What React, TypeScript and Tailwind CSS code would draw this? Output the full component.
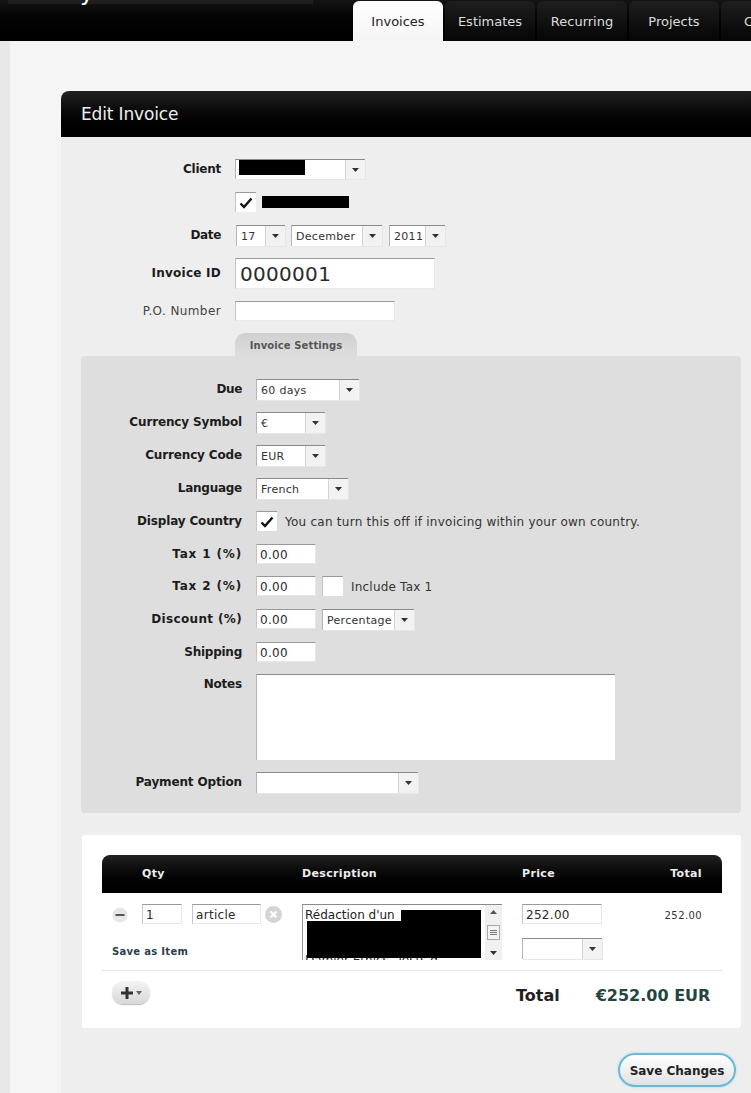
import React from "react";

const Arrow = () => (
  <svg width="7" height="4" viewBox="0 0 7 4" className="block">
    <path d="M0 0h7L3.5 4z" fill="#333" />
  </svg>
);

const Check = () => (
  <svg width="14" height="12" viewBox="0 0 14 12" className="block">
    <path d="M1.5 6.5 5 10l7.5-8.5" fill="none" stroke="#111" strokeWidth="2.4" />
  </svg>
);

function Select({ w, h = "h-[21px]", text, arrow = "w-[20px]" }: { w: string; h?: string; text?: string; arrow?: string }) {
  return (
    <div className={`${w} ${h} flex shrink-0 bg-white border-t border-t-[#8a8a8a] border-l border-l-[#b5b5b5] shadow-[1px_1px_0_#e6e6e6] text-[11px] text-[#333] tracking-[0.3px]`}>
      <div className="flex-1 min-w-0 pl-[4px] pt-[3px] whitespace-nowrap overflow-hidden">{text}</div>
      <div className={`${arrow} shrink-0 bg-[#f2f2f2] border-l border-l-[#d4d4d4] flex items-center justify-center`}>
        <Arrow />
      </div>
    </div>
  );
}

function Input({ w, h = "h-[20px]", text = "", cls = "text-[12px] pl-[3px] pt-[3px]" }: { w: string; h?: string; text?: string; cls?: string }) {
  return (
    <div className={`${w} ${h} ${cls} shrink-0 bg-white border-t border-t-[#9a9a9a] border-l border-l-[#c4c4c4] border-r border-r-[#e8e8e8] border-b border-b-[#e8e8e8] text-[#2a2a2a] tracking-[0.3px] whitespace-nowrap overflow-hidden leading-[15px]`}>
      {text}
    </div>
  );
}

function CheckBox({ on = false }: { on?: boolean }) {
  return (
    <div className="w-[21px] h-[20px] shrink-0 bg-white border-t border-t-[#9a9a9a] border-l border-l-[#c4c4c4] flex items-center justify-center">
      {on && <Check />}
    </div>
  );
}

function TopLabel({ children, bold = true, track = "tracking-[-0.25px]" }: { children: React.ReactNode; bold?: boolean; track?: string }) {
  return (
    <div className={`w-[160px] shrink-0 text-right text-[12px] leading-[18px] pt-[1px] ${track} ${bold ? "font-bold text-[#1c1c1c]" : "text-[#444]"}`}>
      {children}
    </div>
  );
}

function SetRow({ label, children, h = "h-[21px]", track = "tracking-[-0.15px]" }: { label: string; children: React.ReactNode; h?: string; track?: string }) {
  return (
    <div className={`flex gap-[14px] ${h}`}>
      <div className={`w-[161px] shrink-0 text-right font-bold text-[12px] leading-[18px] pt-[1px] text-[#1c1c1c] ${track}`}>{label}</div>
      {children}
    </div>
  );
}

export default function App() {
  return (
    <div className="w-[751px] h-[1093px] overflow-hidden bg-[#f5f5f5] font-['DejaVu_Sans',sans-serif]">
      <header className="h-[41px] bg-gradient-to-b from-[#141414] to-black flex">
        <div className="w-[353px] shrink-0 overflow-hidden">
          <div className="ml-[8px] w-[305px] h-[4px] bg-white/5" />
          <div className="mt-[-26px] pl-[80px] text-[24px] leading-[28px] text-white whitespace-nowrap">y</div>
        </div>
        <nav className="flex gap-[2px] items-end text-[13px]">
          <div className="w-[90px] h-[40px] shrink-0 rounded-t-[6px] bg-gradient-to-b from-white to-[#f5f5f5] text-[#222] flex items-center justify-center pt-[1px]">Invoices</div>
          <div className="w-[90px] h-[40px] shrink-0 rounded-t-[6px] bg-gradient-to-b from-[#1e1e1e] to-[#060606] text-[#ddd] flex items-center justify-center pt-[1px]">Estimates</div>
          <div className="w-[90px] h-[40px] shrink-0 rounded-t-[6px] bg-gradient-to-b from-[#1e1e1e] to-[#060606] text-[#ddd] flex items-center justify-center pt-[1px]">Recurring</div>
          <div className="w-[90px] h-[40px] shrink-0 rounded-t-[6px] bg-gradient-to-b from-[#1e1e1e] to-[#060606] text-[#ddd] flex items-center justify-center pt-[1px]">Projects</div>
          <div className="w-[90px] h-[40px] shrink-0 rounded-t-[6px] bg-gradient-to-b from-[#1e1e1e] to-[#060606] text-[#ddd] flex items-center pl-[23px] pt-[1px]">Clients</div>
        </nav>
      </header>

      <div className="flex h-[1052px]">
        <div className="w-[10px] shrink-0 bg-[#e8e8e8]" />
        <main className="flex-1 min-w-0 pl-[51px] pt-[50px]">
          <div className="h-[46px] rounded-tl-[8px] bg-gradient-to-b from-[#222] to-black text-[#eee] text-[17px] tracking-[-0.15px] leading-[47px] pl-[20px]">Edit Invoice</div>
          <section className="h-[956px] bg-[#eeeeee] pt-[22px]">
            <div className="flex gap-[14px] h-[20px] mb-[13px]">
              <TopLabel>Client</TopLabel>
              <div className="w-[130px] h-[20px] flex shrink-0 bg-white border-t border-t-[#8a8a8a] border-l border-l-[#b5b5b5] shadow-[1px_1px_0_#e6e6e6]">
                <div className="flex-1 pl-[3px]"><div className="w-[66px] h-[15px] bg-black" /></div>
                <div className="w-[20px] bg-[#f2f2f2] border-l border-l-[#d4d4d4] flex items-center justify-center"><Arrow /></div>
              </div>
            </div>
            <div className="flex gap-[14px] h-[20px] mb-[13px]">
              <div className="w-[160px] shrink-0" />
              <CheckBox on />
              <div className="w-[87px] h-[12px] mt-[4px] -ml-[8px] bg-black" />
            </div>
            <div className="flex gap-[14px] h-[21px] mb-[12px]">
              <TopLabel track="tracking-[-0.35px]">Date</TopLabel>
              <div className="flex ml-[1px]">
                <Select w="w-[49px]" text="17" />
                <div className="w-[6px]" />
                <Select w="w-[91px]" text="December" />
                <div className="w-[7px]" />
                <Select w="w-[56px]" text="2011" />
              </div>
            </div>
            <div className="flex gap-[14px] h-[31px] mb-[12px]">
              <div className="pt-[5px]"><TopLabel track="tracking-[0.25px]">Invoice ID</TopLabel></div>
              <Input w="w-[200px]" h="h-[31px]" text="0000001" cls="text-[20px] pl-[4px] pt-[8px]" />
            </div>
            <div className="flex gap-[14px] h-[20px] mb-[12px]">
              <TopLabel bold={false} track="tracking-[0.4px]">P.O. Number</TopLabel>
              <Input w="w-[160px]" />
            </div>
            <div className="ml-[174px] w-[122px] h-[23px] rounded-t-[10px] bg-gradient-to-b from-[#d0d0d0] to-[#dedede] text-center text-[10px] font-bold text-[#555] leading-[25px] tracking-[0.1px]">Invoice Settings</div>

            <div className="ml-[20px] w-[660px] bg-[#dedede] rounded-[4px] pt-[23px] pb-[20px] flex flex-col gap-[12px]">
              <SetRow label="Due" track="tracking-[-0.4px]"><Select w="w-[103px]" text="60 days" /></SetRow>
              <SetRow label="Currency Symbol"><Select w="w-[69px]" text="€" /></SetRow>
              <SetRow label="Currency Code"><Select w="w-[69px]" text="EUR" /></SetRow>
              <SetRow label="Language" track="tracking-[-0.25px]"><Select w="w-[92px]" text="French" /></SetRow>
              <SetRow label="Display Country">
                <CheckBox on />
                <span className="-ml-[6px] pt-[1px] text-[12px] leading-[20px] text-[#333] tracking-[0.25px] whitespace-nowrap">You can turn this off if invoicing within your own country.</span>
              </SetRow>
              <SetRow label="Tax 1 (%)" h="h-[20px]" track="tracking-[0.85px]"><Input w="w-[60px]" text="0.00" /></SetRow>
              <SetRow label="Tax 2 (%)" track="tracking-[0.85px]">
                <Input w="w-[60px]" text="0.00" />
                <div className="-ml-[8px]"><CheckBox /></div>
                <span className="-ml-[6px] pt-[1px] text-[12px] leading-[20px] text-[#333] tracking-[0.2px]">Include Tax 1</span>
              </SetRow>
              <SetRow label="Discount (%)" track="tracking-[0.35px]">
                <Input w="w-[60px]" text="0.00" />
                <div className="-ml-[8px]"><Select w="w-[92px]" text="Percentage" /></div>
              </SetRow>
              <SetRow label="Shipping" h="h-[20px]" track="tracking-[-0.25px]"><Input w="w-[60px]" text="0.00" /></SetRow>
              <SetRow label="Notes" h="h-[86px]" track="tracking-[-0.2px]">
                <div className="w-[359px] h-[86px] bg-white border-t border-t-[#8a8a8a] border-l border-l-[#b5b5b5]" />
              </SetRow>
              <SetRow label="Payment Option"><Select w="w-[162px]" /></SetRow>
            </div>

            <div className="ml-[21px] mt-[22px] w-[659px] h-[193px] bg-white rounded-[3px] pt-[20px] pl-[20px] pr-[19px]">
              <div className="h-[38px] rounded-t-[8px] bg-gradient-to-b from-[#222] to-black text-[#eee] text-[11px] font-bold tracking-[0.35px] flex items-center pt-[1px]">
                <div className="w-[200px] pl-[40px]">Qty</div>
                <div className="w-[220px]">Description</div>
                <div className="w-[100px]">Price</div>
                <div className="w-[80px] text-right">Total</div>
              </div>
              <div className="h-[78px] flex border-b border-b-[#e4e4e4]">
                <div className="w-[200px] pl-[10px] pt-[11px]">
                  <div className="flex items-center h-[20px]">
                    <svg width="16" height="16" viewBox="0 0 16 16" className="block mt-[2px] shrink-0">
                      <circle cx="8" cy="8" r="7.5" fill="#e6e6e6" />
                      <rect x="3.5" y="7" width="9" height="2" fill="#555" />
                    </svg>
                    <div className="w-[14px] shrink-0" />
                    <Input w="w-[40px]" text="1" />
                    <div className="w-[10px] shrink-0" />
                    <Input w="w-[69px]" text="article" />
                    <svg width="17" height="17" viewBox="0 0 17 17" className="block ml-[4px] shrink-0">
                      <circle cx="8.5" cy="8.5" r="8.5" fill="#d4d4d4" />
                      <path d="M5.5 5.5l6 6M11.5 5.5l-6 6" stroke="#fff" strokeWidth="2.2" />
                    </svg>
                  </div>
                  <div className="mt-[21px] text-[10px] font-bold text-[#2b3f4d] leading-[14px] tracking-[0.3px]">Save as Item</div>
                </div>
                <div className="w-[220px] pt-[11px]">
                  <div className="relative w-[200px] h-[56px] bg-white border-t border-t-[#8a8a8a] border-l border-l-[#999] flex overflow-hidden">
                    <div className="flex-1 pl-[2px] text-[12px] leading-[15px] text-[#222] whitespace-nowrap overflow-hidden pt-[3px]">
                      Rédaction d'un
                      <br /><br /><br />
                      Damier Ethics, Tests d
                    </div>
                    <div className="w-[17px] shrink-0 bg-[#f0f0f0] flex flex-col items-center justify-between py-[5px]">
                      <svg width="7" height="4" viewBox="0 0 7 4" className="block"><path d="M0 4h7L3.5 0z" fill="#555" /></svg>
                      <div className="w-[13px] h-[15px] bg-[#f4f4f4] border border-[#aaa] flex flex-col items-center justify-center gap-[1px]">
                        <div className="w-[7px] h-px bg-[#777]" />
                        <div className="w-[7px] h-px bg-[#777]" />
                        <div className="w-[7px] h-px bg-[#777]" />
                      </div>
                      <Arrow />
                    </div>
                    <div className="absolute left-[98px] top-[5px] w-[80px] h-[14px] bg-black" />
                    <div className="absolute left-[4px] top-[16px] w-[174px] h-[37px] bg-black" />
                  </div>
                </div>
                <div className="w-[100px] pt-[11px]">
                  <Input w="w-[80px]" text="252.00" />
                  <div className="h-[14px]" />
                  <Select w="w-[80px]" />
                </div>
                <div className="w-[80px] pt-[16px] text-right text-[10px] leading-[14px] text-[#333] tracking-[0.4px]">252.00</div>
              </div>
              <div className="flex pt-[10px]">
                <div className="ml-[10px] w-[38px] h-[23px] rounded-full bg-gradient-to-b from-[#f4f4f4] to-[#d8d8d8] shadow-[0_1px_1px_#bbb] flex items-center justify-center gap-[3px]">
                  <svg width="12" height="12" viewBox="0 0 12 12" className="block"><path d="M4.5 0h3v4.5H12v3H7.5V12h-3V7.5H0v-3h4.5z" fill="#333" /></svg>
                  <svg width="6" height="4" viewBox="0 0 6 4" className="block"><path d="M0 0h6L3 4z" fill="#666" /></svg>
                </div>
                <div className="ml-[366px] pt-[4px] text-[16px] font-bold text-[#222] leading-[22px] whitespace-nowrap">Total</div>
                <div className="ml-[36px] pt-[4px] text-[16px] font-bold text-[#23443f] leading-[22px] whitespace-nowrap">€252.00 EUR</div>
              </div>
            </div>

            <div className="flex justify-end pr-[15px] mt-[25px]">
              <div className="w-[118px] h-[34px] rounded-full border-2 border-[#6fb6d6] shadow-[0_0_3px_#a9dcf2] bg-gradient-to-b from-white to-[#e2e2e2] text-[12px] font-bold text-[#222] flex items-center justify-center pt-[1px]">Save Changes</div>
            </div>
          </section>
        </main>
      </div>
    </div>
  );
}
